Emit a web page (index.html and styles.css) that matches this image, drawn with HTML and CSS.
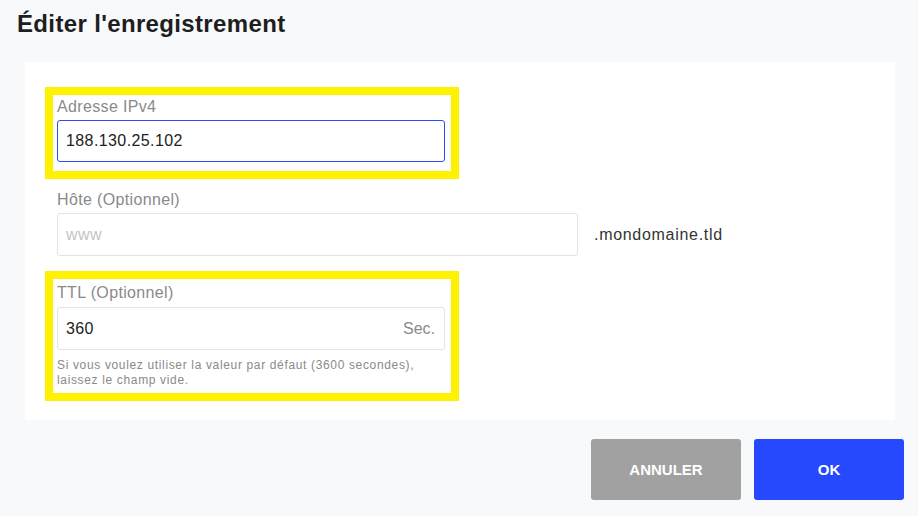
FILE: index.html
```html
<!DOCTYPE html>
<html lang="fr">
<head>
    <meta charset="UTF-8">
    <meta name="viewport" content="width=device-width, initial-scale=1.0">
    <title>Éditer l'enregistrement</title>
    <link rel="stylesheet" href="styles.css">
</head>
<body>

<div class="page">
    <h2 class="title">Éditer l'enregistrement</h2>

    <div class="card">
        <div class="field highlight first">
            <label for="ipv4">Adresse IPv4</label>
            <input type="text" id="ipv4" class="input active" value="188.130.25.102">
        </div>

        <div class="field host">
            <label for="host">Hôte (Optionnel)</label>
            <div class="host-row">
                <input type="text" id="host" class="input wide" placeholder="www">
                <span class="domain">.mondomaine.tld</span>
            </div>
        </div>

        <div class="field highlight second">
            <label for="ttl">TTL (Optionnel)</label>
            <div class="input-wrap">
                <input type="text" id="ttl" class="input" value="360">
                <span class="suffix">Sec.</span>
            </div>
            <p class="help">Si vous voulez utiliser la valeur par défaut (3600 secondes),<br>laissez le champ vide.</p>
        </div>
    </div>

    <div class="actions">
        <button type="button" class="btn btn-cancel">Annuler</button>
        <button type="button" class="btn btn-ok">OK</button>
    </div>
</div>

</body>
</html>
```

FILE: styles.css
```css
body {
    margin: 0;
    background-color: #f8f9fb;
    font-family: "Liberation Sans", Arial, sans-serif;
    color: #222;
}
.page {
    padding: 10px 14px 0 17px;
}
.title {
    margin: 0;
    font-size: 24px;
    line-height: 28px;
    font-weight: bold;
    letter-spacing: 0.35px;
    color: #1e1e1e;
}
.card {
    background-color: #fff;
    margin: 24px 9px 0 8px;
    padding: 25px 20px 19px 20px;
}
.field label {
    display: block;
    font-size: 16px;
    line-height: 18px;
    letter-spacing: 0.35px;
    color: #8a8a8a;
}
.highlight {
    width: 388px;
    border: 8px solid #fff200;
}
.first {
    padding: 3px 6px 9px 4px;
}
.second {
    padding: 5px 6px 5px 4px;
}
.host {
    margin: 12px 0 15px 12px;
}
.input {
    display: block;
    box-sizing: border-box;
    width: 388px;
    height: 42px;
    margin-top: 4px;
    padding: 0 8px;
    border: 1px solid #e3e3e3;
    border-radius: 3px;
    font-family: "Liberation Sans", Arial, sans-serif;
    font-size: 16px;
    letter-spacing: 0.4px;
    color: #222;
    background: #fff;
    outline: none;
}
.input::placeholder {
    color: #c4c4c4;
}
.input.active {
    border-color: #2a4bff;
}
.host-row {
    display: flex;
    align-items: center;
    gap: 16px;
}
.input.wide {
    width: 521px;
    height: 43px;
}
.domain {
    font-size: 16px;
    letter-spacing: 0.7px;
    color: #333;
    margin-top: 4px;
}
.input-wrap {
    position: relative;
    margin-top: 5px;
}
.input-wrap .input {
    margin-top: 0;
    height: 43px;
}
.suffix {
    position: absolute;
    right: 10px;
    top: 0;
    line-height: 43px;
    font-size: 16px;
    color: #8a8a8a;
}
.help {
    margin: 8px 0 0 0;
    font-size: 12px;
    line-height: 15px;
    letter-spacing: 0.65px;
    color: #8a8a8a;
}
.actions {
    display: flex;
    justify-content: flex-end;
    gap: 13px;
    margin-top: 19px;
}
.btn {
    width: 150px;
    height: 61px;
    border: none;
    border-radius: 3px;
    color: #fff;
    font-family: "Liberation Sans", Arial, sans-serif;
    font-size: 15px;
    font-weight: bold;
    text-transform: uppercase;
    cursor: pointer;
}
.btn-cancel {
    background-color: #a1a1a1;
}
.btn-ok {
    background-color: #2649ff;
}
```
